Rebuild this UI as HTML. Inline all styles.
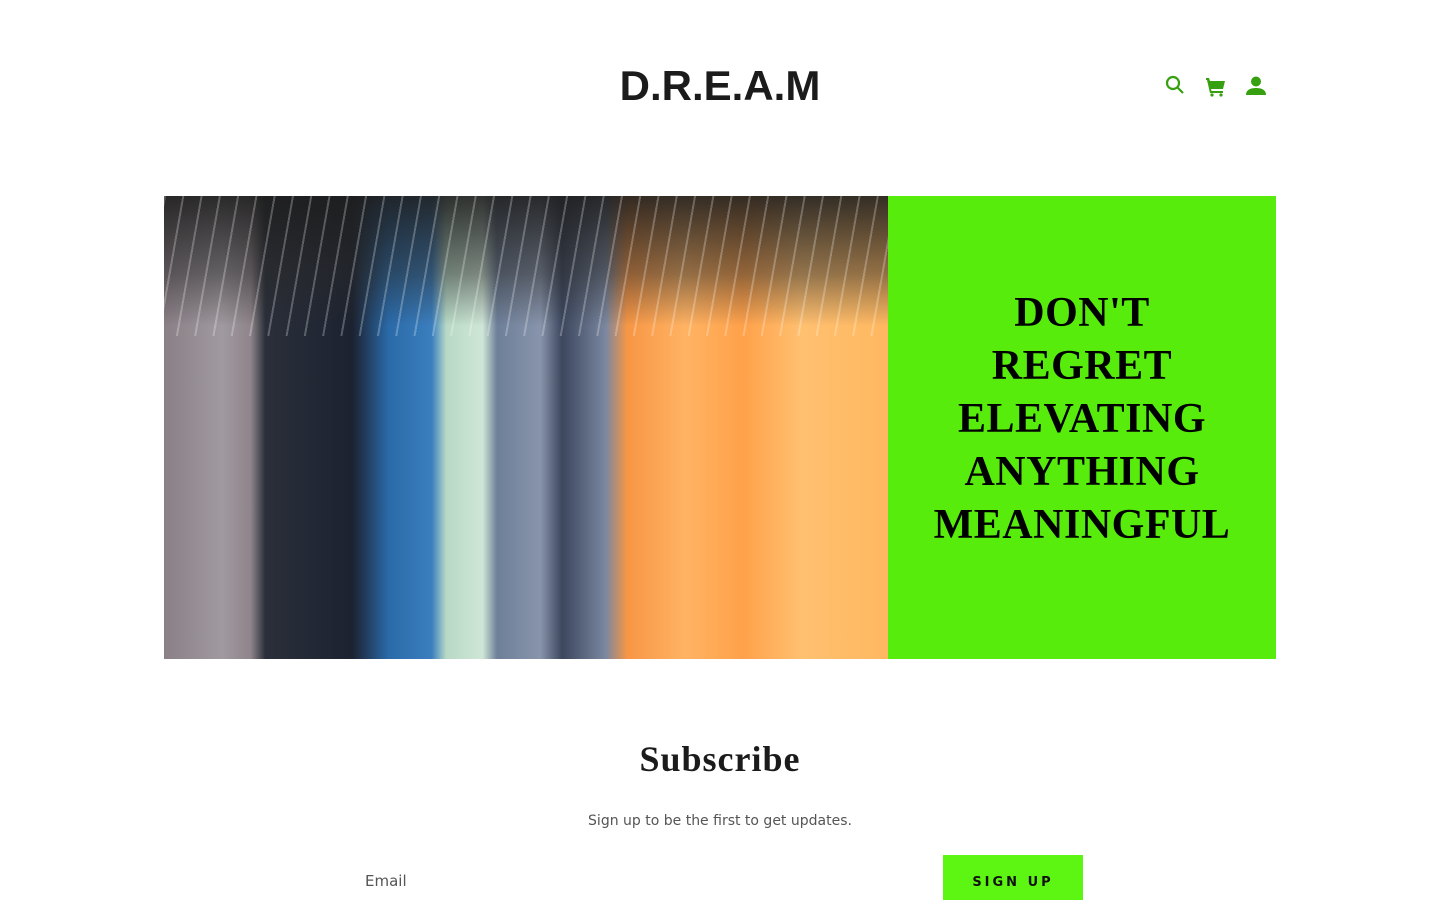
<!DOCTYPE html>
<html><head><meta charset="utf-8"><style>
body{margin:0;background:#fff;width:1440px;height:900px;overflow:hidden;font-family:"DejaVu Sans","Liberation Sans",sans-serif;position:relative}
.logo{position:absolute;top:62px;left:0;width:1440px;text-align:center;font:700 42px "Liberation Sans",sans-serif;color:#1b1b1b}
.icons{position:absolute;top:74px;left:1164px}
.img{position:absolute;left:164px;top:196px;width:724px;height:463px;overflow:hidden;
background:linear-gradient(90deg,#8a7f86 0,#a09aa0 8%,#8e848a 12%,#2a2f3a 14%,#1c2230 26%,#2a6aa8 31%,#3b7fbf 37%,#b8d9c6 39%,#cfe6d6 44%,#6e7f99 46%,#8894ab 52%,#3c475e 55%,#7a87a0 61%,#f79645 64%,#ffb363 72%,#ffa14a 80%,#ffc070 88%,#ffb860 100%)}
.img::before{content:"";position:absolute;left:0;top:0;width:100%;height:130px;background:linear-gradient(180deg,rgba(30,30,30,.9),rgba(40,40,40,.5) 60%,rgba(0,0,0,0));}
.img::after{content:"";position:absolute;left:0;top:0;width:100%;height:140px;background:repeating-linear-gradient(100deg,rgba(255,255,255,.25) 0 2px,rgba(0,0,0,0) 2px 18px)}
.green{position:absolute;left:888px;top:196px;width:388px;height:463px;background:#58ec0d;display:flex;align-items:center;justify-content:center;text-align:center}
.green div{font:900 42px/53px "Liberation Serif",serif;letter-spacing:0.5px;color:#000;margin-top:-16px}
h2{position:absolute;top:738px;left:0;width:1440px;text-align:center;margin:0;font:700 36px "Liberation Serif",serif;letter-spacing:1px;color:#1b1b1b}
.sub{position:absolute;top:813px;width:1440px;text-align:center;font-size:14px;color:#555}
.email{position:absolute;left:365px;top:872px;font-size:15px;color:#555}
.btn{position:absolute;left:943px;top:855px;width:140px;height:45px;background:#5cf612;font:700 13px "DejaVu Sans",sans-serif;letter-spacing:3px;color:#111;text-align:center;line-height:56px}
</style></head><body>
<div class="logo">D.R.E.A.M</div>
<svg class="icons" width="110" height="26" viewBox="0 0 110 26">
<g fill="none" stroke="#37a010" stroke-width="2.2"><circle cx="9" cy="9" r="6"/><path d="M13.5 13.5L19 19"/></g>
<path fill="#37a010" d="M42 4h3l1 3h15l-2 8H47l.5 2H59v2H46l-3-13h-1z"/><circle cx="48" cy="21" r="1.6" fill="#37a010"/><circle cx="57" cy="21" r="1.6" fill="#37a010"/>
<circle cx="92" cy="7.5" r="5" fill="#37a010"/><path fill="#37a010" d="M82 21c0-5 4-7 10-7s10 2 10 7z"/>
</svg>
<div class="img"></div>
<div class="green"><div>DON'T<br>REGRET<br>ELEVATING<br>ANYTHING<br>MEANINGFUL</div></div>
<h2>Subscribe</h2>
<div class="sub">Sign up to be the first to get updates.</div>
<div class="email">Email</div>
<div class="btn">SIGN UP</div>
</body></html>
